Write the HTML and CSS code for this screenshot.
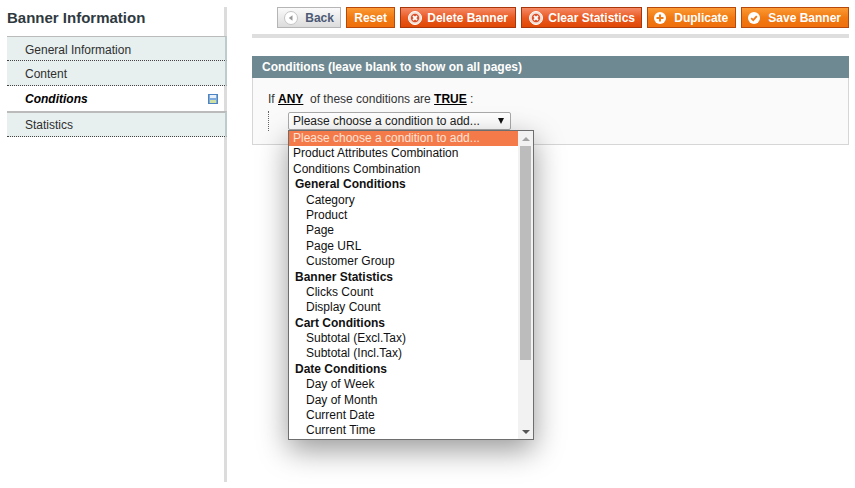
FILE: index.html
```html
<!DOCTYPE html>
<html lang="en">
<head>
    <meta charset="UTF-8">
    <meta name="viewport" content="width=device-width, initial-scale=1.0">
    <title>Banner Information</title>
    <link rel="stylesheet" href="styles.css">
</head>
<body>
    <div class="page">
        <aside class="sidebar">
            <h3 class="sidebar-title">Banner Information</h3>
            <ul class="tabs">
                <li class="tab">General Information</li>
                <li class="tab">Content</li>
                <li class="tab tab-active">
                    Conditions
                    <svg class="save-icon" width="10" height="10" viewBox="0 0 10 10">
                        <rect x="0.5" y="0.5" width="9" height="9" fill="#7fabdc" stroke="#4f84c2"/>
                        <rect x="2" y="1" width="6" height="3" fill="#e8f1fa"/>
                        <rect x="2" y="6" width="6" height="3" fill="#cfe0a0"/>
                    </svg>
                </li>
                <li class="tab">Statistics</li>
            </ul>
        </aside>

        <main class="content">
            <div class="actions">
                <button class="btn btn-back">
                    <svg class="btn-icon" viewBox="0 0 14 14">
                        <circle cx="7" cy="7" r="6.5" fill="#fff" stroke="#c4c4c4"/>
                        <path d="M8.5 4.2v5.6L4.8 7z" fill="#999"/>
                    </svg>
                    Back
                </button>
                <button class="btn btn-reset">Reset</button>
                <button class="btn btn-red btn-delete">
                    <svg class="btn-icon" viewBox="0 0 14 14">
                        <circle cx="7" cy="7" r="6.5" fill="#f4dcd2" stroke="#fff"/>
                        <circle cx="7" cy="7" r="4.2" fill="#d9502a"/>
                        <path d="M5 5l4 4M9 5l-4 4" stroke="#fff" stroke-width="1.8"/>
                    </svg>
                    Delete Banner
                </button>
                <button class="btn btn-red btn-clear">
                    <svg class="btn-icon" viewBox="0 0 14 14">
                        <circle cx="7" cy="7" r="6.5" fill="#f4dcd2" stroke="#fff"/>
                        <circle cx="7" cy="7" r="4.2" fill="#d9502a"/>
                        <path d="M5 5l4 4M9 5l-4 4" stroke="#fff" stroke-width="1.8"/>
                    </svg>
                    Clear Statistics
                </button>
                <button class="btn btn-wide">
                    <svg class="btn-icon" viewBox="0 0 14 14">
                        <circle cx="7" cy="7" r="6" fill="#fff"/>
                        <path d="M7 3.5v7M3.5 7h7" stroke="#ee7a16" stroke-width="2"/>
                    </svg>
                    Duplicate
                </button>
                <button class="btn btn-wide">
                    <svg class="btn-icon" viewBox="0 0 14 14">
                        <circle cx="7" cy="7" r="6" fill="#fff"/>
                        <path d="M4.2 7.2l2 2 3.6-4" fill="none" stroke="#ee7a16" stroke-width="1.8"/>
                    </svg>
                    Save Banner
                </button>
            </div>
            <div class="divider"></div>

            <h4 class="section-head">Conditions (leave blank to show on all pages)</h4>
            <div class="section-body">
                <p class="rule-line">If <u>ANY</u>&nbsp; of these conditions are <u>TRUE</u> :</p>
                <div class="rule-children">
                    <div class="picker">
                        <div class="picker-box">
                            Please choose a condition to add...
                            <span class="picker-arrow"></span>
                        </div>
                        <div class="dropdown">
                            <ul class="options">
                                <li class="option option-selected">Please choose a condition to add...</li>
                                <li class="option">Product Attributes Combination</li>
                                <li class="option">Conditions Combination</li>
                                <li class="group">General Conditions</li>
                                <li class="option option-sub">Category</li>
                                <li class="option option-sub">Product</li>
                                <li class="option option-sub">Page</li>
                                <li class="option option-sub">Page URL</li>
                                <li class="option option-sub">Customer Group</li>
                                <li class="group">Banner Statistics</li>
                                <li class="option option-sub">Clicks Count</li>
                                <li class="option option-sub">Display Count</li>
                                <li class="group">Cart Conditions</li>
                                <li class="option option-sub">Subtotal (Excl.Tax)</li>
                                <li class="option option-sub">Subtotal (Incl.Tax)</li>
                                <li class="group">Date Conditions</li>
                                <li class="option option-sub">Day of Week</li>
                                <li class="option option-sub">Day of Month</li>
                                <li class="option option-sub">Current Date</li>
                                <li class="option option-sub">Current Time</li>
                            </ul>
                            <div class="scrollbar">
                                <span class="scroll-up"></span>
                                <span class="scroll-thumb"></span>
                                <span class="scroll-down"></span>
                            </div>
                        </div>
                    </div>
                </div>
            </div>
        </main>
    </div>
</body>
</html>
```

FILE: styles.css
```css
* {
    box-sizing: border-box;
}

html,
body {
    height: 100%;
}

body {
    margin: 0;
    background-color: #fff;
    color: #2f2f2f;
    font-family: "Liberation Sans", Arial, sans-serif;
    font-size: 12px;
    overflow: hidden;
}

ul {
    list-style: none;
    margin: 0;
    padding: 0;
}

.page {
    display: flex;
    gap: 25px;
    padding: 7px 6px 6px 7px;
    height: 100%;
}

/* left column */
.sidebar {
    width: 220px;
    flex-shrink: 0;
    border-right: 3px solid #dcdcdc;
}

.sidebar-title {
    margin: 0;
    height: 29px;
    padding-top: 2px;
    font-size: 15px;
    line-height: 17px;
    font-weight: bold;
    color: #2f3a3f;
}

.tabs {
    margin-right: -3px;
}

.tab {
    height: 25px;
    padding-left: 18px;
    line-height: 26px;
    color: #2f2f2f;
    background-color: #e7efef;
    border-right: 2px solid #bccbcb;
    border-bottom: 1px dotted #444;
}

.tab:first-child {
    border-top: 1px solid #bbb;
    line-height: 26px;
}

.tab:last-child {
    border-top: 2px solid #bbb;
    height: 26px;
    line-height: 24px;
}

.tab-active {
    position: relative;
    margin-right: 3px;
    background-color: #fff;
    border-right: 0;
    border-bottom: 0;
    font-weight: bold;
    font-style: italic;
    color: #000;
}

.save-icon {
    position: absolute;
    right: 6px;
    top: 8px;
}

/* main column */
.content {
    flex: 1;
    min-width: 0;
}

.actions {
    display: flex;
    justify-content: flex-end;
    gap: 5px;
}

.btn {
    display: flex;
    flex-shrink: 0;
    align-items: center;
    justify-content: flex-start;
    gap: 5px;
    height: 21px;
    padding: 0 7px;
    border: 1px solid #b8480a;
    background: linear-gradient(#fb9a34, #f27a12 50%, #ee6f0c);
    color: #fff;
    font-family: "Liberation Sans", Arial, sans-serif;
    font-size: 12px;
    font-weight: bold;
    white-space: nowrap;
    cursor: pointer;
}

.btn-icon {
    width: 14px;
    height: 14px;
    flex-shrink: 0;
}

.btn-back {
    width: 64px;
    padding-left: 6px;
    gap: 7px;
    border-color: #b5b5b5;
    background: linear-gradient(#fafafa, #e8e8e8 60%, #dcdcdc);
    color: #4d5a75;
}

.btn-reset {
    width: 49px;
}

.btn-red {
    border-color: #a8360a;
    background: linear-gradient(#f58a66, #ea5a22 50%, #e04804);
}

.btn-delete {
    width: 116px;
}

.btn-clear {
    width: 121px;
}

.btn-wide {
    gap: 7px;
    padding-left: 5px;
}

.divider {
    height: 4px;
    margin-top: 6px;
    background-color: #dedede;
}

.section-head {
    margin: 18px 0 0;
    height: 22px;
    padding-left: 10px;
    background-color: #6f8992;
    color: #fff;
    font-size: 12px;
    line-height: 22px;
    font-weight: bold;
}

.section-body {
    height: 67px;
    padding: 13px 15px;
    background-color: #fafafa;
    border: 1px solid #d6d6d6;
    border-top: 0;
}

.rule-line {
    margin: 0;
    line-height: 16px;
    color: #333;
}

.rule-line u {
    font-weight: bold;
    color: #000;
}

.rule-children {
    margin-top: 4px;
    padding-left: 19px;
    padding-top: 1px;
    border-left: 1px dotted #666;
    height: 20px;
}

.picker {
    position: relative;
    width: 223px;
}

.picker-box {
    position: relative;
    height: 18px;
    padding-left: 4px;
    line-height: 17px;
    color: #222;
    background-color: #fff;
    border: 1px solid #aaa;
    border-radius: 2px;
}

.picker-arrow {
    position: absolute;
    right: 6px;
    top: 5px;
    border-left: 3.5px solid transparent;
    border-right: 3.5px solid transparent;
    border-top: 6px solid #111;
}

.dropdown {
    position: absolute;
    left: 0;
    top: 18px;
    display: flex;
    width: 246px;
    height: 310px;
    background-color: #fff;
    border: 1px solid #6e6e6e;
    box-shadow: 0 10px 28px rgba(0, 0, 0, 0.4);
}

.options {
    flex: 1;
    min-width: 0;
}

.option,
.group {
    height: 15.4px;
    line-height: 15.4px;
    padding-left: 4px;
    color: #111;
    white-space: nowrap;
}

.group {
    padding-left: 6px;
    font-weight: bold;
}

.option-sub {
    padding-left: 17px;
}

.option-selected {
    background-color: #f47a4a;
    color: #ffe3d6;
}

.scrollbar {
    display: flex;
    flex-direction: column;
    align-items: center;
    width: 15px;
    background-color: #f2f2f2;
}

.scroll-up {
    margin-top: 6px;
    border-left: 4px solid transparent;
    border-right: 4px solid transparent;
    border-bottom: 4px solid #a3a3a3;
}

.scroll-thumb {
    width: 11px;
    height: 214px;
    margin-top: 5px;
    background-color: #bcbcbc;
}

.scroll-down {
    margin-top: auto;
    margin-bottom: 5px;
    border-left: 4px solid transparent;
    border-right: 4px solid transparent;
    border-top: 4px solid #555;
}
```
